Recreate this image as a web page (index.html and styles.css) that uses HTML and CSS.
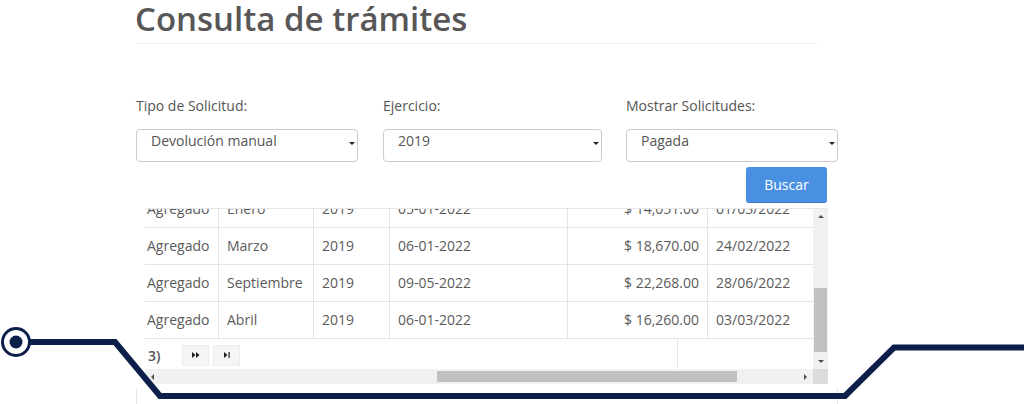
FILE: index.html
```html
<!DOCTYPE html>
<html lang="es">
<head>
  <meta charset="UTF-8">
  <meta name="viewport" content="width=device-width, initial-scale=1.0">
  <title>Consulta de trámites</title>
  <link rel="stylesheet" href="styles.css">
</head>
<body>

<div class="page">
  <h1 class="title">Consulta de trámites</h1>
  <hr class="rule">

  <div class="filters">
    <div class="field field-tipo">
      <label>Tipo de Solicitud:</label>
      <div class="select"><span>Devolución manual</span><i class="caret"></i></div>
    </div>
    <div class="field field-ejercicio">
      <label>Ejercicio:</label>
      <div class="select"><span>2019</span><i class="caret"></i></div>
    </div>
    <div class="field field-estado">
      <label>Mostrar Solicitudes:</label>
      <div class="select"><span>Pagada</span><i class="caret"></i></div>
    </div>
  </div>

  <div class="actions">
    <button type="button" class="btn-buscar">Buscar</button>
  </div>

  <div class="grid-box">
    <div class="grid-main">
      <div class="grid-view">
        <div class="grid-scroll">
          <table class="grid">
            <colgroup>
              <col style="width: 80px">
              <col style="width: 95px">
              <col style="width: 76px">
              <col style="width: 178px">
              <col style="width: 140px">
              <col style="width: 106px">
            </colgroup>
            <tbody>
              <tr><td>Agregado</td><td>Enero</td><td>2019</td><td>05-01-2022</td><td class="num">$ 14,051.00</td><td>01/03/2022</td></tr>
              <tr><td>Agregado</td><td>Marzo</td><td>2019</td><td>06-01-2022</td><td class="num">$ 18,670.00</td><td>24/02/2022</td></tr>
              <tr><td>Agregado</td><td>Septiembre</td><td>2019</td><td>09-05-2022</td><td class="num">$ 22,268.00</td><td>28/06/2022</td></tr>
              <tr><td>Agregado</td><td>Abril</td><td>2019</td><td>06-01-2022</td><td class="num">$ 16,260.00</td><td>03/03/2022</td></tr>
            </tbody>
          </table>
          <div class="pager">
            <span class="pager-info">3)</span>
            <button type="button" class="pager-btn">
              <svg viewBox="0 0 8 6" width="8" height="6"><path d="M0 0L3.5 3L0 6Z M4 0L7.5 3L4 6Z" fill="#222"/></svg>
            </button>
            <button type="button" class="pager-btn">
              <svg viewBox="0 0 8 6" width="8" height="6"><path d="M1 0L4.5 3L1 6Z" fill="#222"/><rect x="5.5" y="0" width="1.2" height="6" fill="#222"/></svg>
            </button>
          </div>
        </div>
      </div>
      <div class="vscroll">
        <div class="sb-btn"><i class="arrow arrow-up"></i></div>
        <div class="vtrack"><div class="vthumb"></div></div>
        <div class="sb-btn"><i class="arrow arrow-down"></i></div>
      </div>
    </div>
    <div class="hscroll-row">
      <div class="hscroll">
        <div class="sb-btn"><i class="arrow arrow-left"></i></div>
        <div class="htrack"><div class="hthumb"></div></div>
        <div class="sb-btn"><i class="arrow arrow-right"></i></div>
      </div>
      <div class="sb-corner"></div>
    </div>
  </div>
  <div class="panel-foot"></div>
</div>

<svg class="deco" viewBox="0 0 1024 404" width="1024" height="404">
  <polyline points="22,342 115,342 160,396 845,396 894,347.5 1024,347.5" fill="none" stroke="#0c1f4b" stroke-width="6"/>
  <circle cx="16" cy="342" r="13.5" fill="#fff" stroke="#0c1f4b" stroke-width="3"/>
  <circle cx="16" cy="342" r="6.5" fill="#0c1f4b"/>
</svg>

</body>
</html>
```

FILE: styles.css
```css
body {
  margin: 0;
  font-family: "Open Sans", "Liberation Sans", sans-serif;
  color: #555;
  background: #fff;
  overflow: hidden;
}

.page {
  margin-left: 136px;
  width: 702px;
}

.title {
  margin: 0 0 0 -1px;
  font-size: 33px;
  line-height: 38px;
  font-weight: 600;
  color: #575757;
}

.rule {
  width: 682px;
  margin: 5px 0 0;
  border: none;
  border-top: 1px solid #eee;
}

.filters {
  display: flex;
  margin-top: 52px;
}

.field label {
  display: block;
  font-size: 14px;
  line-height: 20px;
  height: 33px;
}
.field-tipo { width: 222px; margin-right: 25px; }
.field-ejercicio { width: 219px; margin-right: 24px; }
.field-estado { width: 212px; }

.select {
  position: relative;
  border: 1px solid #ccc;
  border-radius: 4px;
  padding: 1px 14px 0;
  font-size: 14px;
  line-height: 20px;
  box-sizing: border-box;
  height: 33px;
  color: #555;
}
.caret {
  position: absolute;
  right: 2px;
  top: 12px;
  width: 0;
  height: 0;
  border-left: 3px solid transparent;
  border-right: 3px solid transparent;
  border-top: 3px solid #222;
}

.actions {
  display: flex;
  justify-content: flex-end;
  padding-right: 11px;
  margin-top: 5px;
}
.btn-buscar {
  width: 81px;
  height: 36px;
  border: none;
  border-bottom: 1px solid #3a78c8;
  border-radius: 3px;
  background: #4a90e2;
  color: #fff;
  font-family: inherit;
  font-size: 14px;
  cursor: pointer;
}

.grid-box {
  margin: 5px 0 0 9px;
  width: 683px;
  border-top: 1px solid #e6e6e6;
}
.grid-main {
  display: flex;
}
.grid-view {
  width: 668px;
  height: 160px;
  overflow: hidden;
}
.grid-scroll {
  margin: -19px 0 0 -7px;
}

.grid {
  table-layout: fixed;
  width: 675px;
  border-collapse: collapse;
  font-size: 14px;
  line-height: 20px;
  color: #5a5a5a;
}
.grid td {
  padding: 8px;
  border: 1px solid #e3e3e3;
  white-space: nowrap;
  overflow: hidden;
}
.grid td.num {
  text-align: right;
}

.pager {
  display: flex;
  align-items: center;
  width: 540px;
  height: 32px;
  border-right: 1px solid #e3e3e3;
  box-sizing: border-box;
}
.pager-info {
  padding-left: 10px;
  width: 34px;
  font-size: 14px;
  font-weight: 600;
  color: #555;
}
.pager-btn {
  width: 27px;
  height: 21px;
  margin-right: 4px;
  padding: 0;
  border: 1px solid #ececec;
  background: #f5f5f5;
  display: flex;
  align-items: center;
  justify-content: center;
}

/* fake scrollbars */
.vscroll {
  width: 15px;
  height: 160px;
  background: #f1f1f1;
  display: flex;
  flex-direction: column;
}
.vtrack {
  flex: 1;
  position: relative;
}
.vthumb {
  position: absolute;
  top: 64px;
  left: 1px;
  width: 13px;
  height: 64px;
  background: #c1c1c1;
}
.sb-btn {
  width: 15px;
  height: 15px;
  display: flex;
  align-items: center;
  justify-content: center;
  flex: none;
}
.arrow {
  width: 0;
  height: 0;
}
.arrow-up {
  border-left: 3px solid transparent;
  border-right: 3px solid transparent;
  border-bottom: 3px solid #505050;
}
.arrow-down {
  border-left: 3px solid transparent;
  border-right: 3px solid transparent;
  border-top: 3px solid #505050;
}
.arrow-left {
  border-top: 3px solid transparent;
  border-bottom: 3px solid transparent;
  border-right: 3px solid #505050;
}
.arrow-right {
  border-top: 3px solid transparent;
  border-bottom: 3px solid transparent;
  border-left: 3px solid #505050;
}

.hscroll-row {
  display: flex;
}
.hscroll {
  width: 668px;
  height: 15px;
  background: #f1f1f1;
  display: flex;
}
.htrack {
  flex: 1;
  position: relative;
}
.hthumb {
  position: absolute;
  left: 277px;
  top: 2px;
  width: 300px;
  height: 11px;
  background: #c1c1c1;
}
.sb-corner {
  width: 15px;
  height: 15px;
  background: #dcdcdc;
}

.panel-foot {
  height: 16px;
  margin-top: 4px;
  border-left: 1px solid #e6e6e6;
  border-right: 1px solid #e6e6e6;
}

.deco {
  position: absolute;
  top: 0;
  left: 0;
  pointer-events: none;
}
```
